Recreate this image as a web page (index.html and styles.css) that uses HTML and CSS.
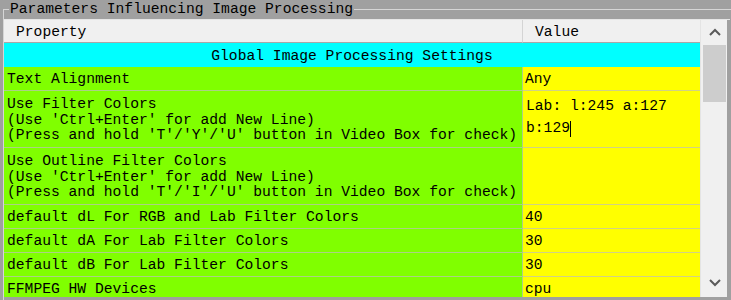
FILE: index.html
```html
<!DOCTYPE html>
<html lang="en">
<head>
<meta charset="utf-8">
<title>Parameters Influencing Image Processing</title>
<link rel="stylesheet" href="styles.css">
</head>
<body>
<fieldset class="group">
  <legend class="group-title">Parameters Influencing Image Processing</legend>
  <div class="frame">
    <div class="grid">
      <div class="hcell hprop">Property</div>
      <div class="hcell hval">Value</div>
      <div class="section">Global Image Processing Settings</div>

      <div class="cell prop">Text Alignment</div>
      <div class="cell val">Any</div>

      <div class="cell prop multi"><div>Use Filter Colors<br>(Use 'Ctrl+Enter' for add New Line)<br>(Press and hold 'T'/'Y'/'U' button in Video Box for check)</div></div>
      <div class="cell val edit"><div>Lab: l:245 a:127<br>b:129<span class="caret"></span></div></div>

      <div class="cell prop multi"><div>Use Outline Filter Colors<br>(Use 'Ctrl+Enter' for add New Line)<br>(Press and hold 'T'/'I'/'U' button in Video Box for check)</div></div>
      <div class="cell val"></div>

      <div class="cell prop">default dL For RGB and Lab Filter Colors</div>
      <div class="cell val">40</div>

      <div class="cell prop">default dA For Lab Filter Colors</div>
      <div class="cell val">30</div>

      <div class="cell prop">default dB For Lab Filter Colors</div>
      <div class="cell val">30</div>

      <div class="cell prop">FFMPEG HW Devices</div>
      <div class="cell val">cpu</div>
    </div>
    <div class="scroll">
      <div class="sbtn">
        <svg width="12" height="8" viewBox="0 0 12 8"><polyline points="1,7 6,2 11,7" fill="none" stroke="#5a5a5a" stroke-width="2"/></svg>
      </div>
      <div class="track"><div class="thumb"></div></div>
      <div class="sbtn down">
        <svg width="12" height="8" viewBox="0 0 12 8"><polyline points="1,1 6,6 11,1" fill="none" stroke="#5a5a5a" stroke-width="2"/></svg>
      </div>
    </div>
  </div>
</fieldset>
</body>
</html>
```

FILE: styles.css
```css
html, body {
  margin: 0;
  padding: 0;
}
body {
  width: 731px;
  height: 300px;
  overflow: hidden;
  background: #a0a0a0;
  font-family: "Liberation Mono", "DejaVu Sans Mono", monospace;
  font-size: 14.67px;
  color: #000;
}
.group {
  box-sizing: border-box;
  width: 728px;
  height: 300px;
  margin: 0 0 0 3px;
  padding: 1px 1px 3px 0;
  border: none;
  border-top: 1px solid #d6d6d6;
  border-left: 1px solid #d6d6d6;
  min-width: 0;
}
.group-title {
  margin-left: 5px;
  padding: 0 1px;
  line-height: 18px;
  height: 18px;
}
.frame {
  display: flex;
  height: 278px;
  border-top: 1px solid #e6e6e6;
  box-sizing: border-box;
}
.grid {
  width: 696px;
  height: 277px;
  overflow: hidden;
  display: grid;
  grid-template-columns: 519px 177px;
  grid-template-rows: 23px 24px 24px 57px 57px 24px 24px 24px 24px;
}
.hcell {
  box-sizing: border-box;
  background: #f0f0f0;
  border-bottom: 1px solid #a8a8a8;
  display: flex;
  align-items: center;
  padding-left: 12px;
  padding-top: 2px;
  line-height: 16px;
}
.hprop {
  border-right: 1px solid #d4d4d4;
}
.section {
  box-sizing: border-box;
  grid-column: 1 / span 2;
  background: #00ffff;
  display: flex;
  align-items: center;
  justify-content: center;
  padding-top: 2px;
  line-height: 16px;
}
.cell {
  box-sizing: border-box;
  display: flex;
  align-items: center;
  padding-top: 2px;
  line-height: 15.7px;
  border-bottom: 1px solid rgba(190, 190, 190, 0.7);
  white-space: nowrap;
}
.prop {
  background: #80ff00;
  padding-left: 3px;
  border-right: 1px solid rgba(190, 190, 190, 0.7);
}
.multi {
  padding-top: 3px;
}
.val {
  background: #ffff00;
  padding-left: 2px;
}
.edit {
  align-items: flex-start;
  padding-left: 3px;
  padding-top: 5px;
  line-height: 21.6px;
}
.caret {
  display: inline-block;
  width: 1px;
  height: 16px;
  background: #000;
  vertical-align: -5px;
}
.scroll {
  box-sizing: border-box;
  width: 27px;
  height: 277px;
  background: #f0f0f0;
  border-left: 1px solid #e4e4e4;
  display: flex;
  flex-direction: column;
}
.sbtn {
  height: 23px;
  display: flex;
  align-items: center;
  justify-content: center;
  padding-left: 1px;
}
.sbtn.down {
  margin-bottom: 3px;
}
.track {
  flex: 1;
  padding: 2px 1px 0 2px;
}
.thumb {
  height: 57px;
  background: #cdcdcd;
}
```
